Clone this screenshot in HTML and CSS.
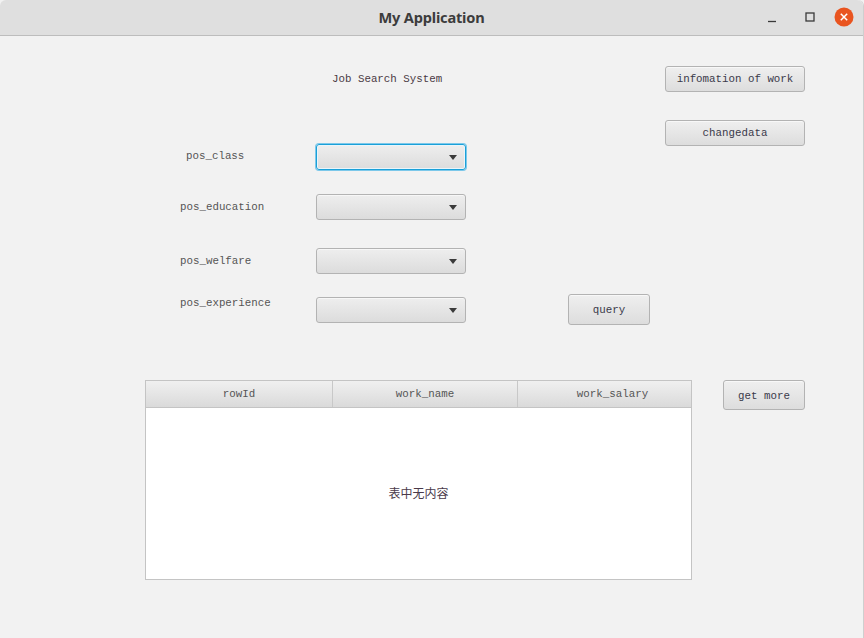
FILE: index.html
```html
<!DOCTYPE html>
<html>
<head>
<meta charset="utf-8">
<title>My Application</title>
<link rel="stylesheet" href="styles.css">
</head>
<body>
<div class="window">
  <div class="titlebar">
    <div class="title">My Application</div>
    <div class="controls">
      <span class="ctl ctl-min"><svg width="10" height="10" viewBox="0 0 10 10"><path d="M1 8.5H9" stroke="#3a3a3a" stroke-width="1.3"/></svg></span>
      <span class="ctl ctl-max"><svg width="10" height="10" viewBox="0 0 10 10"><rect x="1" y="1" width="8" height="8" fill="none" stroke="#3a3a3a" stroke-width="1.3"/></svg></span>
      <span class="ctl ctl-close"><svg width="20" height="20" viewBox="0 0 20 20"><circle cx="10" cy="10" r="9.5" fill="#e9541f"/><path d="M6.8 6.8L13.2 13.2M13.2 6.8L6.8 13.2" stroke="#fff" stroke-width="1.5"/></svg></span>
    </div>
  </div>
  <div class="content">
    <div class="top">
      <div class="form">
        <div class="heading">Job Search System</div>
        <div class="row row1">
          <div class="label l1">pos_class</div>
          <div class="combo focused"><span class="arrow"></span></div>
        </div>
        <div class="row row2">
          <div class="label l2">pos_education</div>
          <div class="combo"><span class="arrow"></span></div>
        </div>
        <div class="row row3">
          <div class="label l3">pos_welfare</div>
          <div class="combo"><span class="arrow"></span></div>
        </div>
        <div class="row row4">
          <div class="label l4">pos_experience</div>
          <div class="combo"><span class="arrow"></span></div>
          <button class="btn query">query</button>
        </div>
      </div>
      <div class="side">
        <button class="btn info">infomation of work</button>
        <button class="btn change">changedata</button>
      </div>
    </div>
    <div class="bottom">
      <div class="table">
        <div class="thead">
          <div class="th c1">rowId</div>
          <div class="th c2">work_name</div>
          <div class="th c3">work_salary</div>
        </div>
        <div class="tbody">表中无内容</div>
      </div>
      <button class="btn more">get more</button>
    </div>
  </div>
</div>
</body>
</html>
```

FILE: styles.css
```css
* { box-sizing: border-box; }
html, body { margin: 0; padding: 0; }
body {
  width: 864px;
  height: 638px;
  overflow: hidden;
  background: #f2f2f2;
  font-family: "Liberation Mono", "Noto Sans CJK SC", monospace;
}
.window {
  width: 864px;
  height: 638px;
  background: #f2f2f2;
  border-right: 1px solid #cfcfcf;
  border-top-right-radius: 6px;
}
.titlebar {
  height: 36px;
  background: #dfdfdf;
  border-bottom: 1px solid #bdbdbd;
  border-top-left-radius: 6px;
  border-top-right-radius: 6px;
  display: flex;
  align-items: center;
  justify-content: center;
  position: relative;
}
.title {
  font-family: "Noto Sans", "DejaVu Sans", sans-serif;
  font-weight: 700;
  font-size: 14.6px;
  color: #3c3c3c;
  letter-spacing: -0.2px;
  margin-top: -1px;
}
.controls {
  position: absolute;
  right: 9px;
  top: 7px;
  display: flex;
  align-items: center;
}
.ctl { display: flex; align-items: center; justify-content: center; }
.ctl-min { width: 10px; height: 10px; margin-right: 28px; margin-top: 1px; }
.ctl-max { width: 10px; height: 10px; margin-right: 19px; }
.ctl-close { width: 20px; height: 20px; }

.content {
  height: 602px;
  color: #3a3a3a;
  font-size: 10.8px;
}
.top { display: flex; height: 289px; }
.form { width: 665px; }
.heading {
  margin: 35px 0 0 332px;
  line-height: 16px;
  height: 16px;
  color: #4a3a44;
}
.row { display: flex; align-items: flex-start; height: 26px; }
.row1 { margin-top: 57px; }
.row2 { margin-top: 24px; }
.row3 { margin-top: 28px; }
.row4 { margin-top: 23px; }
.label {
  width: 316px;
  padding-left: 180px;
  line-height: 16px;
  color: #555;
}
.l1 { padding-left: 186px; margin-top: 4px; }
.l2 { margin-top: 5px; }
.l3 { margin-top: 5px; }
.l4 { margin-top: -2px; }
.combo {
  width: 150px;
  height: 26px;
  border: 1px solid #b3b3b3;
  border-radius: 3px;
  background: linear-gradient(#eeeeee, #dcdcdc);
  box-shadow: inset 0 1px 0 #f7f7f7;
  display: flex;
  align-items: center;
  justify-content: flex-end;
  padding-right: 8px;
}
.combo.focused {
  border: 1px solid #1aa0d8;
  box-shadow: 0 0 0 1px #7cc8ea, inset 0 0 0 1px #e9f5fb;
}
.arrow {
  width: 0; height: 0;
  border-left: 4.5px solid transparent;
  border-right: 4.5px solid transparent;
  border-top: 5px solid #3a3a3a;
  margin-top: 1px;
}
.btn {
  font-family: "Liberation Mono", "Noto Sans CJK SC", monospace;
  font-size: 10.8px;
  color: #3a3a4a;
  border: 1px solid #b3b3b3;
  border-radius: 3px;
  background: linear-gradient(#efefef, #dddddd);
  box-shadow: inset 0 1px 0 #f8f8f8;
  padding: 0;
  display: flex;
  align-items: center;
  justify-content: center;
}
.query {
  width: 82px;
  height: 31px;
  margin-left: 102px;
  margin-top: -3px;
  padding-top: 1px;
}
.side { width: 140px; }
.info { width: 140px; height: 26px; margin-top: 30px; }
.change { width: 140px; height: 26px; margin-top: 28px; }

.bottom { display: flex; align-items: flex-start; margin-top: 55px; }
.table {
  margin-left: 145px;
  width: 547px;
  height: 200px;
  border: 1px solid #c4c4c4;
  background: #fff;
  display: flex;
  flex-direction: column;
  overflow: hidden;
}
.thead {
  height: 27px;
  display: flex;
  flex-shrink: 0;
  background: linear-gradient(#f0f0f0, #dadada);
  border-bottom: 1px solid #c4c4c4;
}
.th {
  display: flex;
  align-items: center;
  justify-content: center;
  color: #555;
  padding-bottom: 1px;
  flex-shrink: 0;
}
.c1 { width: 187px; border-right: 1px solid #c8c8c8; }
.c2 { width: 185px; border-right: 1px solid #c8c8c8; }
.c3 { width: 189px; }
.tbody {
  flex: 1;
  display: flex;
  align-items: center;
  justify-content: center;
  font-family: "Noto Sans CJK SC", sans-serif;
  font-size: 12px;
  color: #4a3a4a;
  padding-bottom: 3px;
}
.more {
  width: 82px;
  height: 30px;
  margin-left: 31px;
  padding-top: 1px;
}
```
